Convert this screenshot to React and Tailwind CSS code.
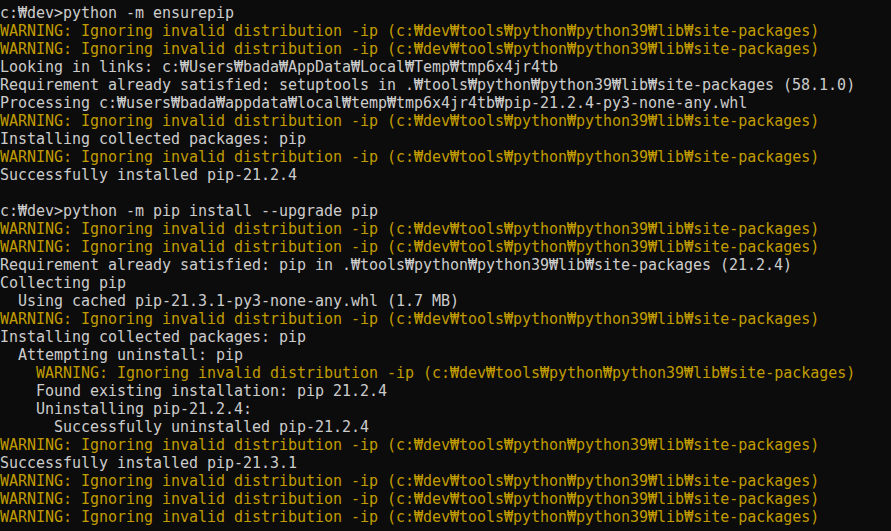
import React from "react";

const Y = "text-[#c19c00]";
const G = "text-[#cccccc]";
const WARN = "WARNING: Ignoring invalid distribution -ip (c:₩dev₩tools₩python₩python39₩lib₩site-packages)";

const lines = [
  [G, "c:₩dev>python -m ensurepip"],
  [Y, WARN],
  [Y, WARN],
  [G, "Looking in links: c:₩Users₩bada₩AppData₩Local₩Temp₩tmp6x4jr4tb"],
  [G, "Requirement already satisfied: setuptools in .₩tools₩python₩python39₩lib₩site-packages (58.1.0)"],
  [G, "Processing c:₩users₩bada₩appdata₩local₩temp₩tmp6x4jr4tb₩pip-21.2.4-py3-none-any.whl"],
  [Y, WARN],
  [G, "Installing collected packages: pip"],
  [Y, WARN],
  [G, "Successfully installed pip-21.2.4"],
  [G, ""],
  [G, "c:₩dev>python -m pip install --upgrade pip"],
  [Y, WARN],
  [Y, WARN],
  [G, "Requirement already satisfied: pip in .₩tools₩python₩python39₩lib₩site-packages (21.2.4)"],
  [G, "Collecting pip"],
  [G, "  Using cached pip-21.3.1-py3-none-any.whl (1.7 MB)"],
  [Y, WARN],
  [G, "Installing collected packages: pip"],
  [G, "  Attempting uninstall: pip"],
  [Y, "    " + WARN],
  [G, "    Found existing installation: pip 21.2.4"],
  [G, "    Uninstalling pip-21.2.4:"],
  [G, "      Successfully uninstalled pip-21.2.4"],
  [Y, WARN],
  [G, "Successfully installed pip-21.3.1"],
  [Y, WARN],
  [Y, WARN],
  [Y, WARN],
];

// keep the won sign on the 9px grid whatever font draws it
const Line = ({ text }) =>
  text.split("₩").map((part, i) => (
    <React.Fragment key={i}>
      {i > 0 && <span className="inline-block w-[9px] text-center tracking-normal">₩</span>}
      {part}
    </React.Fragment>
  ));

export default function App() {
  return (
    <div className="w-[891px] h-[531px] bg-[#0c0c0c] overflow-hidden pt-[4px] font-['DejaVu_Sans_Mono','Liberation_Mono',monospace] text-[15px] tracking-[-0.03px] leading-[18px]">
      {lines.map(([color, text], i) => (
        <div key={i} className={`${color} whitespace-pre h-[18px]`}>
          <Line text={text} />
        </div>
      ))}
      <div className="h-[18px] flex items-end">
        <div className="ml-[119px] w-[9px] h-[6px] bg-[#f2f2f2] mb-[-1px]" />
      </div>
    </div>
  );
}
